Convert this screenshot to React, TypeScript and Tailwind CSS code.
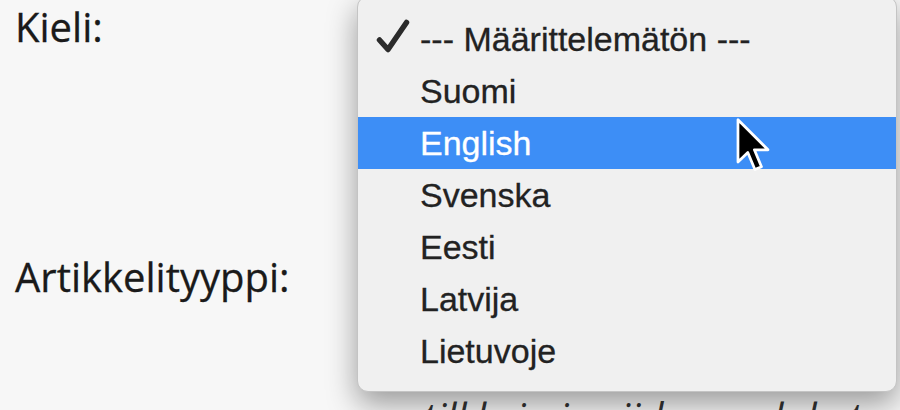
import React from "react";

const options = ["--- Määrittelemätön ---", "Suomi", "English", "Svenska", "Eesti", "Latvija", "Lietuvoje"];

function Check() {
  return (
    <svg width="40" height="40" viewBox="0 0 40 40" className="absolute left-[16px] top-[4px]">
      <path d="M5.5 23 L14 32.5 L32.5 5.5" fill="none" stroke="#2b2b2b" strokeWidth="5.5" strokeLinecap="round" strokeLinejoin="round" />
    </svg>
  );
}

function Cursor() {
  return (
    <svg width="36" height="56" viewBox="0 0 13 20.5" className="absolute left-[735px] top-[117px] z-20">
      <path d="M1 1 L1 16.5 L4.6 13 L7.2 19.2 L9.6 18.2 L7 12 L12 12 Z" fill="#000" stroke="#fff" strokeWidth="1" strokeLinejoin="round" />
    </svg>
  );
}

export default function App() {
  return (
    <div className="relative h-[410px] w-[900px] overflow-hidden bg-[#f7f7f7]">
      <div className="flex flex-col pl-[15px] text-[#1a1a1a]" style={{ fontFamily: "'Open Sans', sans-serif" }}>
        <div className="pt-[1px] text-[40px] leading-[52px] [-webkit-text-stroke:0.3px_currentColor]">Kieli:</div>
        <div className="mt-[198px] text-[40px] leading-[52px] [-webkit-text-stroke:0.3px_currentColor]">Artikkelityyppi:</div>
        <div className="mt-[88px] pl-[408px] text-[40px] italic leading-[52px] text-[#333] whitespace-nowrap">tilkkeja ja viidesosa lukut</div>
      </div>

      <div
        className="absolute left-[357px] top-[-4px] z-10 w-[540px] rounded-[11px] border border-[#c4c4c4] bg-[#f0f0f0] pt-[16px] pb-[14px] shadow-[0_12px_30px_rgba(0,0,0,0.38)]"
        style={{ fontFamily: "'Liberation Sans', Arial, sans-serif" }}
      >
        {options.map((o, i) => (
          <div
            key={o}
            className={`relative flex h-[52px] items-center pl-[62px] text-[34px] [-webkit-text-stroke:0.3px_currentColor] ${i === 2 ? "bg-[#3d8ef6] text-white" : "text-[#222]"}`}
          >
            {i === 0 && <Check />}
            {o}
          </div>
        ))}
      </div>
      <Cursor />
    </div>
  );
}
